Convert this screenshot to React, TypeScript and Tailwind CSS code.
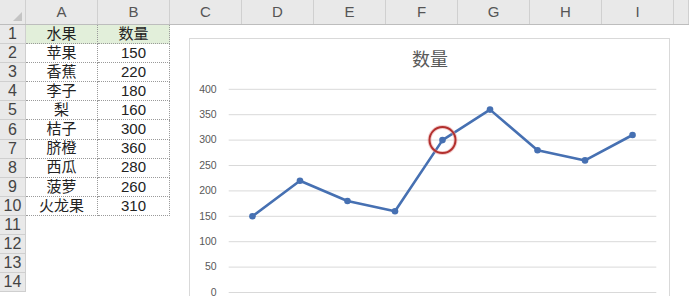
const cols = ["A", "B", "C", "D", "E", "F", "G", "H", "I", ""];
const rows = [
  ["水果", "数量"],
  ["苹果", "150"],
  ["香蕉", "220"],
  ["李子", "180"],
  ["梨", "160"],
  ["桔子", "300"],
  ["脐橙", "360"],
  ["西瓜", "280"],
  ["菠萝", "260"],
  ["火龙果", "310"],
];
const values = [150, 220, 180, 160, 300, 360, 280, 260, 310];

const font = { fontFamily: '"Liberation Sans Narrow", "Liberation Sans", "Noto Sans CJK SC", sans-serif' };

function Chart() {
  const left = 38.7;
  const right = 466.3;
  const top = 50.3;
  const step = 25.4;
  const band = (right - left) / values.length;
  const pts = values.map((v, i) => [left + band / 2 + i * band, top + ((400 - v) / 50) * step]);
  const ticks = [400, 350, 300, 250, 200, 150, 100, 50, 0];

  return (
    <div className="absolute left-[189px] top-[38px] w-[481px] h-[270px] bg-white border border-[#d9d9d9]">
      <svg width="480" height="270" className="block">
        <text x="240" y="27" textAnchor="middle" fontSize="18" fill="#595959" fontFamily='"Noto Sans CJK SC", sans-serif'>
          数量
        </text>
        {ticks.map((t, i) => (
          <g key={t}>
            <line x1={left} x2={right} y1={top + i * step} y2={top + i * step} stroke="#d9d9d9" strokeWidth="1" />
            <text x="26.7" y={top + i * step + 3.2} textAnchor="end" fontSize="10.5" fill="#595959" fontFamily='"Liberation Sans", sans-serif'>
              {t}
            </text>
          </g>
        ))}
        <polyline
          points={pts.map((p) => p.join(",")).join(" ")}
          fill="none"
          stroke="#4670b2"
          strokeWidth="2.6"
          strokeLinejoin="round"
        />
        {pts.map(([x, y], i) => (
          <circle key={i} cx={x} cy={y} r="3.3" fill="#4670b2" />
        ))}
        <circle cx={pts[4][0]} cy={pts[4][1]} r="13" fill="none" stroke="#e8a0a0" strokeWidth="4" opacity="0.5" />
        <circle cx={pts[4][0]} cy={pts[4][1]} r="13" fill="none" stroke="#b3302e" strokeWidth="2" />
      </svg>
    </div>
  );
}

export default function App() {
  return (
    <div className="relative w-[689px] h-[296px] overflow-hidden bg-white text-[#222]" style={font}>
      <div className="grid grid-cols-[26px_repeat(9,72px)_1fr] h-[25px] bg-[#e9e9e9] border-b border-[#bdbdbd]">
        <div className="relative border-r border-[#d0d0d0]">
          <div className="absolute right-[3px] bottom-[3px] w-0 h-0 border-l-[9px] border-l-transparent border-b-[9px] border-b-[#c4c4c4]" />
        </div>
        {cols.map((c, i) => (
          <div key={i} className="flex items-end justify-center pb-[1px] text-[15px] text-[#555] border-r border-[#d0d0d0]">
            {c}
          </div>
        ))}
      </div>
      <div className="grid grid-cols-[26px_repeat(9,72px)_1fr] grid-rows-[repeat(14,19.1px)]">
        {Array.from({ length: 14 }).map((_, r) => (
          <div key={r} className="contents">
            <div className="flex items-center justify-center bg-[#e9e9e9] border-r border-b border-[#cfcfcf] text-[16px] text-[#444]">
              {r + 1}
            </div>
            {r < 10 ? (
              rows[r].map((t, c) => (
                <div
                  key={c}
                  className={`flex items-center justify-center text-[15px] border-r border-b border-dotted border-[#9a9a9a] ${r === 0 ? "bg-[#e2efda]" : ""}`}
                >
                  {t}
                </div>
              ))
            ) : (
              <>
                <div />
                <div />
              </>
            )}
            <div className="col-span-8" />
          </div>
        ))}
      </div>
      <Chart />
    </div>
  );
}
